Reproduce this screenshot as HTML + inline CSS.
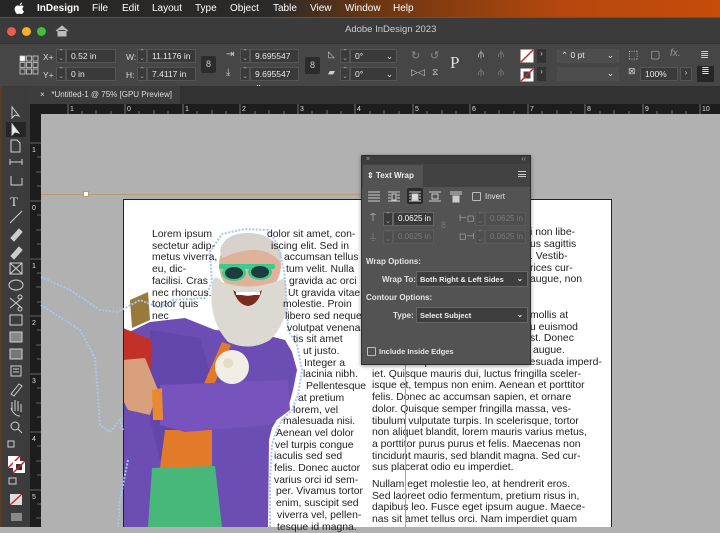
<!DOCTYPE html>
<html><head><meta charset="utf-8">
<style>
*{margin:0;padding:0;box-sizing:border-box}
body{width:720px;height:527px;overflow:hidden;position:relative;background:#b1b1b1;font-family:"Liberation Sans",Arial,sans-serif}
.a{position:absolute}
#menu{left:0;top:0;width:720px;height:17px;background:linear-gradient(90deg,#262626 0%,#2c2a28 38%,#6a3612 52%,#b5480e 78%,#c64c0a 100%);color:#fff;font-size:10px;font-weight:bold}
#menu span{position:absolute;top:3px}
#title{left:0;top:17px;width:720px;height:26px;background:#3b3b3b;border-top:1px solid #555}
.dot{position:absolute;top:9px;width:9px;height:9px;border-radius:50%}
#ctrl{left:0;top:43px;width:720px;height:43px;background:#464646;border-top:1px solid #353535}
.fld{position:absolute;height:14px;background:#3a3a3a;border:1px solid #555;color:#e8e8e8;font-size:8.5px;padding:1px 0 0 4px}
.stp{position:absolute;width:10px;height:14px;border:1px solid #555;background:#3a3a3a;color:#aaa;font-size:7px;text-align:center;line-height:6px}
.lbl{position:absolute;color:#d8d8d8;font-size:8.5px}
.ic{position:absolute;color:#cfcfcf;font-size:11px}
#tabs{left:0;top:86px;width:720px;height:18px;background:#323232}
#rulerT{left:30px;top:104px;width:690px;height:10px;background:#1d1d1d;color:#ddd;font-size:7px}
#rulerL{left:30px;top:104px;width:11px;height:423px;background:#1d1d1d;color:#ddd;font-size:7px}
#tools{left:0;top:86px;width:30px;height:441px;background:#3c3c3c;border-left:2px solid #5a3a20}
#page{left:123px;top:199px;width:489px;height:328px;background:#fff;border:1px solid #222;border-bottom:none}
.t{position:absolute;font-size:10.4px;color:#1e1e1e;white-space:nowrap;line-height:11px}
#panel{left:361px;top:155px;width:170px;height:210px;background:#535353;border:1px solid #2e2e2e;box-shadow:0 1px 4px rgba(0,0,0,.4);color:#e4e4e4;font-size:8px}
#panel .p{position:absolute;white-space:nowrap}
.sel{position:absolute;height:16px;background:#3e3e3e;border:1px solid #666;color:#eee;font-size:7.5px;padding:3px 0 0 3px;font-weight:bold}
.cb{position:absolute;width:9px;height:9px;border:1px solid #bbb;border-radius:1px}
</style></head><body>

<div id="menu" class="a">
<svg class="a" style="left:14px;top:2px" width="11" height="13"><path d="M5.5 3.5 Q6 1 8 0.5 Q8 3 5.5 3.5 Z M5.5 4 Q3 2.8 1.5 4.5 Q0 6.5 1 9 Q2.5 12.5 4 12 Q5.5 11.3 7 12 Q8.5 12.5 10 9.5 Q8 8.3 8.5 6 Q9 5 9.8 4.7 Q8 2.8 5.5 4 Z" fill="#fff"/></svg>
<span style="left:37px">InDesign</span><span style="left:92px;font-weight:normal">File</span><span style="left:122px;font-weight:normal">Edit</span><span style="left:152px;font-weight:normal">Layout</span><span style="left:195px;font-weight:normal">Type</span><span style="left:230px;font-weight:normal">Object</span><span style="left:273px;font-weight:normal">Table</span><span style="left:310px;font-weight:normal">View</span><span style="left:345px;font-weight:normal">Window</span><span style="left:393px;font-weight:normal">Help</span>
</div>

<div id="title" class="a">
<div class="dot" style="left:7px;background:#ee5a52"></div>
<div class="dot" style="left:22px;background:#f5b12a"></div>
<div class="dot" style="left:37px;background:#3ec13b"></div>
<svg class="a" style="left:55px;top:7px" width="14" height="12"><path d="M1 6 L7 1 L13 6 M3 5 V11 H11 V5" fill="#bbb" stroke="#bbb"/></svg>
<div class="a" style="left:345px;top:6px;color:#ccc;font-size:9.5px">Adobe InDesign 2023</div>
</div>

<div id="ctrl" class="a">
<svg class="a" style="left:19px;top:11px" width="20" height="20"><g fill="none" stroke="#ccc" stroke-width=".8"><rect x="1" y="1" width="5" height="5" fill="#fff"/><rect x="7.5" y="1" width="5" height="5"/><rect x="14" y="1" width="5" height="5"/><rect x="1" y="7.5" width="5" height="5"/><rect x="7.5" y="7.5" width="5" height="5"/><rect x="14" y="7.5" width="5" height="5"/><rect x="1" y="14" width="5" height="5"/><rect x="7.5" y="14" width="5" height="5"/><rect x="14" y="14" width="5" height="5"/></g></svg>
<div class="lbl" style="left:43px;top:8px">X+</div><div class="stp" style="left:56px;top:5px">⌃<br>⌄</div><div class="fld" style="left:66px;top:5px;width:50px">0.52 in</div>
<div class="lbl" style="left:43px;top:26px">Y+</div><div class="stp" style="left:56px;top:23px">⌃<br>⌄</div><div class="fld" style="left:66px;top:23px;width:50px">0 in</div>
<div class="lbl" style="left:126px;top:8px">W:</div><div class="stp" style="left:137px;top:5px">⌃<br>⌄</div><div class="fld" style="left:147px;top:5px;width:49px">11.1176 in</div>
<div class="lbl" style="left:126px;top:26px">H:</div><div class="stp" style="left:137px;top:23px">⌃<br>⌄</div><div class="fld" style="left:147px;top:23px;width:49px">7.4117 in</div>
<div class="a" style="left:201px;top:12px;width:15px;height:17px;background:#2c2c2c;border-radius:2px;color:#ccc;font-size:9px;text-align:center;line-height:17px">8</div>
<div class="ic" style="left:226px;top:5px;font-size:10px">⇥</div><div class="ic" style="left:226px;top:23px;font-size:10px">⤓</div>
<div class="stp" style="left:240px;top:5px">⌃<br>⌄</div><div class="fld" style="left:250px;top:5px;width:49px">9.695547 ⌄</div>
<div class="stp" style="left:240px;top:23px">⌃<br>⌄</div><div class="fld" style="left:250px;top:23px;width:49px">9.695547 ⌄</div>
<div class="a" style="left:305px;top:13px;width:15px;height:17px;background:#2c2c2c;border-radius:2px;color:#ccc;font-size:9px;text-align:center;line-height:17px">8</div>
<div class="ic" style="left:328px;top:5px;font-size:9px">◺</div><div class="ic" style="left:328px;top:23px;font-size:9px">▰</div>
<div class="stp" style="left:340px;top:5px">⌃<br>⌄</div><div class="fld" style="left:350px;top:5px;width:47px">0° <span style="float:right;padding-right:3px">⌄</span></div>
<div class="stp" style="left:340px;top:23px">⌃<br>⌄</div><div class="fld" style="left:350px;top:23px;width:47px">0° <span style="float:right;padding-right:3px">⌄</span></div>
<div class="ic" style="left:411px;top:5px;color:#888">↻</div><div class="ic" style="left:430px;top:5px;color:#888">↺</div>
<div class="ic" style="left:411px;top:23px;font-size:9px">▷◁</div><div class="ic" style="left:432px;top:23px;font-size:9px">⧖</div>
<div class="a" style="left:450px;top:9px;color:#ddd;font-family:'Liberation Serif',serif;font-size:17px">P</div>
<div class="ic" style="left:478px;top:5px;font-size:10px">⫛</div><div class="ic" style="left:498px;top:5px;color:#888;font-size:10px">⫛</div>
<div class="ic" style="left:478px;top:23px;color:#888;font-size:10px">⫛</div><div class="ic" style="left:498px;top:23px;color:#888;font-size:10px">⫛</div>
<svg class="a" style="left:520px;top:5px" width="14" height="34"><rect x=".5" y=".5" width="13" height="13" fill="#fff"/><line x1="1" y1="13" x2="13" y2="1" stroke="#c22" stroke-width="1.5"/><rect x=".5" y="19.5" width="13" height="13" fill="#fff"/><rect x="3.5" y="22.5" width="7" height="7" fill="#444"/><line x1="1" y1="32" x2="13" y2="20" stroke="#c22" stroke-width="1.5"/></svg>
<div class="a" style="left:537px;top:5px;width:9px;height:14px;background:#333;color:#ccc;font-size:8px;text-align:center">›</div>
<div class="a" style="left:537px;top:23px;width:9px;height:14px;background:#333;color:#ccc;font-size:8px;text-align:center">›</div>
<div class="fld" style="left:557px;top:5px;width:62px;border:none;background:#4d4d4d">⌃ 0 pt <span style="float:right;padding-right:5px">⌄</span></div>
<div class="fld" style="left:557px;top:23px;width:62px;border:none;background:#4d4d4d"><span style="float:right;padding-right:5px">⌄</span></div>
<div class="ic" style="left:628px;top:4px">⬚</div><div class="ic" style="left:650px;top:4px;color:#aaa">▢</div><div class="ic" style="left:670px;top:4px;color:#999;font-style:italic;font-size:10px">fx.</div>
<div class="ic" style="left:628px;top:22px;font-size:9px">⊠</div><div class="fld" style="left:640px;top:23px;width:38px">100%</div>
<div class="a" style="left:680px;top:23px;width:12px;height:14px;background:#3a3a3a;border:1px solid #555;color:#ccc;font-size:8px;text-align:center">›</div>
<div class="ic" style="left:700px;top:4px">≣</div>
<div class="a" style="left:697px;top:22px;width:17px;height:16px;background:#262626;color:#ddd;font-size:10px;text-align:center">≣</div>
</div>

<div id="tabs" class="a">
<div class="a" style="left:30px;top:0;width:150px;height:18px;background:#3d3d3d;color:#ddd;font-size:8px;padding:4px 0 0 10px">×&nbsp;&nbsp; *Untitled-1 @ 75% [GPU Preview]</div>
</div>

<div id="tools" class="a">
<svg width="28" height="441" fill="none" stroke="#cfcfcf" stroke-width="1">
<rect x="4" y="36" width="20" height="15" fill="#262626" stroke="none"/>
<path d="M10 21 L10 32 L13 29 L17 30 Z"/>
<path d="M10 38 L10 49 L13 46 L17 47 Z" fill="#eee"/>
<path d="M9 54 H15 L18 57 V66 H9 Z"/>
<path d="M8 76 H20 M8 73 V79 M20 73 V79"/>
<path d="M9 90 V99 H20 V92"/>
<text x="8" y="120" fill="#ddd" stroke="none" font-size="13" font-family="Liberation Serif">T</text>
<path d="M8 137 L20 125"/>
<path d="M9 152 L17 143 L20 146 L12 155 Z" fill="#ccc"/>
<path d="M9 170 L17 161 L20 164 L12 173 Z" fill="#ccc"/>
<rect x="8" y="177" width="12" height="11"/><path d="M8 177 L20 188 M20 177 L8 188"/>
<ellipse cx="14" cy="199" rx="7" ry="5"/>
<path d="M8 212 L20 222 M8 222 L20 212"/><circle cx="18" cy="211" r="2"/><circle cx="18" cy="223" r="2"/>
<rect x="8" y="229" width="12" height="10"/>
<rect x="8" y="246" width="12" height="10" fill="#888"/>
<rect x="8" y="263" width="12" height="10" fill="#777"/>
<path d="M9 280 H19 V290 H9 Z M11 283 H17 M11 286 H17"/>
<path d="M9 308 L17 298 L20 300 L12 310 Z"/>
<path d="M10 325 V316 M13 325 V314 M16 325 V315 M19 326 V318 M9 322 Q12 330 18 330"/>
<circle cx="13" cy="340" r="4"/><path d="M16 343 L20 347"/>
<rect x="6" y="355" width="6" height="6"/>
<path d="M6 370 L18 370 L18 382 L6 382" stroke="none" fill="#fff"/><path d="M6 382 L18 370" stroke="#c22" stroke-width="1.5"/>
<rect x="11" y="375" width="12" height="12" fill="#fff" stroke="none"/><rect x="14" y="378" width="6" height="6" fill="#333" stroke="none"/><path d="M11 387 L23 375" stroke="#c22" stroke-width="1.5"/>
<rect x="7" y="392" width="7" height="6"/>
<rect x="8" y="408" width="12" height="11" fill="#ddd" stroke="none"/><path d="M8 419 L20 408" stroke="#c22" stroke-width="1.3"/>
<rect x="9" y="427" width="11" height="8" fill="#888" stroke="none"/>
</svg>
</div>

<div id="rulerT" class="a">
<svg width="690" height="10" stroke="#aaa" stroke-width=".6"><g>
<path d="M38 0 V10 M95 0 V10 M153 0 V10 M210 0 V10 M268 0 V10 M325 0 V10 M383 0 V10 M440 0 V10 M498 0 V10 M555 0 V10 M613 0 V10 M670 0 V10"/>
<path d="M52 7 V10 M66 6 V10 M81 7 V10 M109 7 V10 M124 6 V10 M138 7 V10 M167 7 V10 M182 6 V10 M196 7 V10 M225 7 V10 M239 6 V10 M254 7 V10 M282 7 V10 M297 6 V10 M311 7 V10 M340 7 V10 M354 6 V10 M369 7 V10 M397 7 V10 M412 6 V10 M426 7 V10 M455 7 V10 M469 6 V10 M484 7 V10 M512 7 V10 M527 6 V10 M541 7 V10 M570 7 V10 M584 6 V10 M599 7 V10 M627 7 V10 M642 6 V10 M656 7 V10"/></g>
<g fill="#ddd" stroke="none" font-size="7" font-family="Liberation Sans"><text x="40" y="7">1</text><text x="97" y="7">0</text><text x="155" y="7">1</text><text x="212" y="7">2</text><text x="270" y="7">3</text><text x="327" y="7">4</text><text x="385" y="7">5</text><text x="442" y="7">6</text><text x="500" y="7">7</text><text x="557" y="7">8</text><text x="615" y="7">9</text><text x="672" y="7">10</text></g></svg>
</div>
<div id="rulerL" class="a" style="top:114px;height:413px">
<svg width="11" height="413" stroke="#aaa" stroke-width=".6">
<path d="M0 29 H11 M0 87 H11 M0 145 H11 M0 202 H11 M0 260 H11 M0 318 H11 M0 376 H11"/>
<path d="M7 43 H11 M6 58 H11 M7 72 H11 M7 101 H11 M6 116 H11 M7 130 H11 M7 159 H11 M6 173 H11 M7 188 H11 M7 216 H11 M6 231 H11 M7 245 H11 M7 274 H11 M6 289 H11 M7 303 H11 M7 332 H11 M6 347 H11 M7 361 H11 M7 390 H11 M6 404 H11"/>
<g fill="#ddd" stroke="none" font-size="7" font-family="Liberation Sans"><text x="2" y="38">1</text><text x="2" y="96">0</text><text x="2" y="154">1</text><text x="2" y="211">2</text><text x="2" y="269">3</text><text x="2" y="327">4</text><text x="2" y="385">5</text></g></svg>
</div>

<div id="page" class="a"></div>

<div class="a" style="left:41px;top:194px;width:330px;height:1px;background:#b59a73"></div>
<div class="a" style="left:83px;top:191px;width:6px;height:6px;background:#fff;border:1px solid #b59a73"></div>

<!-- person + outline (behind text) -->
<svg class="a" style="left:0;top:0" width="720" height="527">
<defs><clipPath id="pg"><rect x="124" y="200" width="300" height="327"/></clipPath></defs>
<g clip-path="url(#pg)">
<path d="M123 335 L150 322 L185 318 L215 330 L262 334 L285 340 L292 352 L297 370 L293 390 L289 405 L279 416 L272 428 L269 440 L268 527 L123 527 Z" fill="#6b4db3"/>
<path d="M150 330 L200 338 L215 390 L200 450 L160 460 L150 420 Z" fill="#5c3fa0" opacity=".5"/>
<path d="M165 430 L212 430 L212 468 L160 468 Z" fill="#e27a2a"/>
<path d="M222 342 L231 345 L209 397 L200 393 Z" fill="#e27a2a"/>
<path d="M160 385 L288 380 L290 410 L270 425 L185 432 L160 425 Z" fill="#7653bd"/>
<path d="M152 468 L215 466 L222 527 L148 527 Z" fill="#48b87a"/>
<path d="M123 328 L152 340 L150 378 L123 368 Z" fill="#c2302a"/>
<path d="M123 360 L145 358 L158 390 L150 415 L128 410 L123 400 Z" fill="#d9a07e"/>
<path d="M152 390 L162 388 L163 420 L153 420 Z" fill="#e98a30"/>
<path d="M130 300 L148 292 L150 320 L132 328 Z" fill="#9a7a3a"/>
<circle cx="232" cy="367" r="17" fill="#f1eee6"/><circle cx="228" cy="363" r="5" fill="#e6dcc0"/>
<ellipse cx="250" cy="265" rx="31" ry="31" fill="#dfb29a"/>
<path d="M220 250 Q225 232 250 233 Q275 234 282 255 L280 262 Q262 240 222 258 Z" fill="#d8d2cc"/>
<path d="M212 285 Q214 272 222 282 Q250 292 280 280 Q288 275 286 292 Q290 320 270 340 Q250 352 228 342 Q208 320 212 285 Z" fill="#dcd9d2"/>
<path d="M233 290 Q248 302 262 290 Q258 305 248 306 Q238 305 233 290 Z" fill="#7a2a20"/>
<path d="M236 292 H260 V295 H236 Z" fill="#fff"/>
<rect x="219" y="264" width="56" height="5" rx="2" fill="#3fc98e"/>
<ellipse cx="234" cy="273" rx="12" ry="8" fill="#3fc98e"/><ellipse cx="234" cy="273" rx="9" ry="6" fill="#1d3c3e"/>
<ellipse cx="260" cy="272" rx="12" ry="8" fill="#3fc98e"/><ellipse cx="260" cy="272" rx="9" ry="6" fill="#1d3c3e"/>
</g>
<g fill="none" stroke="#a9c6ee" stroke-width="2" stroke-dasharray="2 1.5">
<path d="M41 277 L70 290 L100 310 L118 312 L140 300 L160 308 L172 300 L205 298 L212 282 L210 252 L222 234 L245 229 L268 230 L278 245 L284 270 L286 292 L288 330 L297 345 L302 370 L298 395 L292 410 L282 420 L276 432 L272 445 L270 480 L270 527"/>
<path d="M41 305 L80 330 L95 358 L98 395 L100 425 L110 432 L120 420 L123 430"/>
<path d="M128 460 L120 500 L118 527"/>
</g>
</svg>

<div class="t" style="left:152px;top:229px;line-height:11.7px">Lorem ipsum<br>sectetur adip-<br>metus viverra,<br>eu, dic-<br>facilisi. Cras<br>nec rhoncus.<br>tortor quis<br>nec</div>

<div class="t" style="left:267px;top:229px">dolor sit amet, con-</div>
<div class="t" style="left:271px;top:240.7px">iscing elit. Sed in</div>
<div class="t" style="left:284px;top:252.4px">accumsan tellus</div>
<div class="t" style="left:286px;top:264.1px">tum velit. Nulla</div>
<div class="t" style="left:289px;top:275.8px">gravida ac orci</div>
<div class="t" style="left:288px;top:287.5px">Ut gravida vitae</div>
<div class="t" style="left:283px;top:299.2px">molestie. Proin</div>
<div class="t" style="left:285px;top:310.9px">libero sed neque</div>
<div class="t" style="left:287px;top:322.6px">volutpat venena-</div>
<div class="t" style="left:293px;top:334.3px">tis sit amet</div>
<div class="t" style="left:303px;top:346px">ut justo.</div>
<div class="t" style="left:304px;top:357.7px">Integer a</div>
<div class="t" style="left:303px;top:369.4px">lacinia nibh.</div>
<div class="t" style="left:306px;top:381.1px">Pellentesque</div>
<div class="t" style="left:298px;top:392.8px">at pretium</div>
<div class="t" style="left:293px;top:404.5px">lorem, vel</div>
<div class="t" style="left:283px;top:416.2px">malesuada nisi.</div>
<div class="t" style="left:276px;top:427.9px">Aenean vel dolor</div>
<div class="t" style="left:275px;top:439.6px">vel turpis congue</div>
<div class="t" style="left:274px;top:451.3px">iaculis sed sed</div>
<div class="t" style="left:274px;top:463px">felis. Donec auctor</div>
<div class="t" style="left:274px;top:474.7px">varius orci id sem-</div>
<div class="t" style="left:276px;top:486.4px">per. Vivamus tortor</div>
<div class="t" style="left:276px;top:498.1px">enim, suscipit sed</div>
<div class="t" style="left:277px;top:509.8px">viverra vel, pellen-</div>
<div class="t" style="left:277px;top:521.5px">tesque id magna.</div>

<div class="t" style="left:530px;top:227px">i non libe-</div>
<div class="t" style="left:530px;top:239px">us sagittis</div>
<div class="t" style="left:530px;top:251px">. Vestib-</div>
<div class="t" style="left:530px;top:263px">rices cur-</div>
<div class="t" style="left:530px;top:274px">augue, non</div>
<div class="t" style="left:530px;top:310px">mollis at</div>
<div class="t" style="left:530px;top:322px">u euismod</div>
<div class="t" style="left:530px;top:333px">st. Donec</div>
<div class="t" style="left:533px;top:345px">augue.</div>
<div class="t" style="left:372px;top:357px">Sed consequat tortor et lectus malesuada imperd-</div>
<div class="t" style="left:372px;top:368.7px">iet. Quisque mauris dui, luctus fringilla sceler-</div>
<div class="t" style="left:372px;top:380.4px">isque et, tempus non enim. Aenean et porttitor</div>
<div class="t" style="left:372px;top:392.1px">felis. Donec ac accumsan sapien, et ornare</div>
<div class="t" style="left:372px;top:403.8px">dolor. Quisque semper fringilla massa, ves-</div>
<div class="t" style="left:372px;top:415.5px">tibulum vulputate turpis. In scelerisque, tortor</div>
<div class="t" style="left:372px;top:427.2px">non aliquet blandit, lorem mauris varius metus,</div>
<div class="t" style="left:372px;top:438.9px">a porttitor purus purus et felis. Maecenas non</div>
<div class="t" style="left:372px;top:450.6px">tincidunt mauris, sed blandit magna. Sed cur-</div>
<div class="t" style="left:372px;top:462.3px">sus placerat odio eu imperdiet.</div>
<div class="t" style="left:372px;top:479px">Nullam eget molestie leo, at hendrerit eros.</div>
<div class="t" style="left:372px;top:490.7px">Sed laoreet odio fermentum, pretium risus in,</div>
<div class="t" style="left:372px;top:502.4px">dapibus leo. Fusce eget ipsum augue. Maece-</div>
<div class="t" style="left:372px;top:514.1px">nas sit amet tellus orci. Nam imperdiet quam</div>

<div class="a" style="left:405px;top:190px;width:1px;height:337px;background:#c9a25e"></div>

<div id="panel" class="a">
<div class="a" style="left:0;top:0;width:168px;height:8px;background:#3c3c3c;color:#aaa;font-size:7px;line-height:8px;padding-left:4px">×<span style="position:absolute;right:4px">‹‹</span></div>
<div class="a" style="left:0;top:8px;width:168px;height:23px;background:#424242"></div>
<div class="a" style="left:1px;top:9px;width:60px;height:22px;background:#535353;font-weight:bold;font-size:8px;padding:6px 0 0 4px;color:#eee">⇕ Text Wrap</div>
<div class="a" style="left:156px;top:15px;width:8px;height:6px;border-top:1px solid #ccc;border-bottom:1px solid #ccc"></div>
<div class="a" style="left:156px;top:17.5px;width:8px;height:1px;background:#ccc"></div>
<div class="a" style="left:45px;top:32px;width:16px;height:16px;background:#2a2a2a;border-radius:2px"></div>
<svg class="a" style="left:0;top:32px" width="120" height="17" stroke="#ccc" stroke-width="1" fill="none">
<path d="M6 4 H18 M6 7 H18 M6 10 H18 M6 13 H18"/>
<path d="M26 4 H38 M26 7 H29 M35 7 H38 M26 10 H29 M35 10 H38 M26 13 H38"/><rect x="30" y="6" width="4" height="6"/>
<path d="M47 4 H59 M47 7 H49 M57 7 H59 M47 10 H49 M57 10 H59 M47 13 H59"/><rect x="50" y="6" width="6" height="6" fill="#ddd"/>
<path d="M67 4 H79 M67 13 H79"/><rect x="70" y="6" width="6" height="5"/>
<path d="M88 4 H100 M88 6 H100"/><rect x="91" y="8" width="6" height="6" fill="#ccc"/>
</svg>
<div class="cb" style="left:110px;top:36px"></div><div class="p" style="left:123px;top:36px">Invert</div>
<div class="ic" style="left:8px;top:57px;font-size:10px">⍑</div>
<div class="stp" style="left:21px;top:56px;border-color:#666">⌃<br>⌄</div><div class="fld" style="left:31px;top:56px;width:41px;border-color:#666;color:#fff;font-size:8px">0.0625 in</div>
<div class="ic" style="left:8px;top:75px;font-size:10px;color:#888">⍊</div>
<div class="stp" style="left:21px;top:74px;border-color:#5a5a5a;background:#4e4e4e;color:#777">⌃<br>⌄</div><div class="fld" style="left:31px;top:74px;width:41px;border-color:#5a5a5a;background:#4e4e4e;color:#7a7a7a;font-size:8px">0.0625 in</div>
<div class="a" style="left:79px;top:64px;width:9px;height:17px;color:#777;font-size:9px">8</div>
<div class="ic" style="left:97px;top:57px;font-size:9px;color:#bbb">⊢◻</div>
<div class="stp" style="left:113px;top:56px;border-color:#5a5a5a;background:#4e4e4e;color:#777">⌃<br>⌄</div><div class="fld" style="left:123px;top:56px;width:41px;border-color:#5a5a5a;background:#4e4e4e;color:#7a7a7a;font-size:8px">0.0625 in</div>
<div class="ic" style="left:97px;top:75px;font-size:9px;color:#bbb">◻⊣</div>
<div class="stp" style="left:113px;top:74px;border-color:#5a5a5a;background:#4e4e4e;color:#777">⌃<br>⌄</div><div class="fld" style="left:123px;top:74px;width:41px;border-color:#5a5a5a;background:#4e4e4e;color:#7a7a7a;font-size:8px">0.0625 in</div>
<div class="p" style="left:4px;top:101px;font-weight:bold">Wrap Options:</div>
<div class="p" style="left:20px;top:119px;font-weight:bold">Wrap To:</div>
<div class="sel" style="left:54px;top:115px;width:112px">Both Right &amp; Left Sides<span style="position:absolute;right:4px;top:2px">⌄</span></div>
<div class="p" style="left:4px;top:137px;font-weight:bold">Contour Options:</div>
<div class="p" style="left:31px;top:155px;font-weight:bold">Type:</div>
<div class="sel" style="left:54px;top:151px;width:112px">Select Subject<span style="position:absolute;right:4px;top:2px">⌄</span></div>
<div class="cb" style="left:5px;top:191px"></div><div class="p" style="left:17px;top:191px;font-weight:bold;font-size:7.5px">Include Inside Edges</div>
</div>

</body></html>
